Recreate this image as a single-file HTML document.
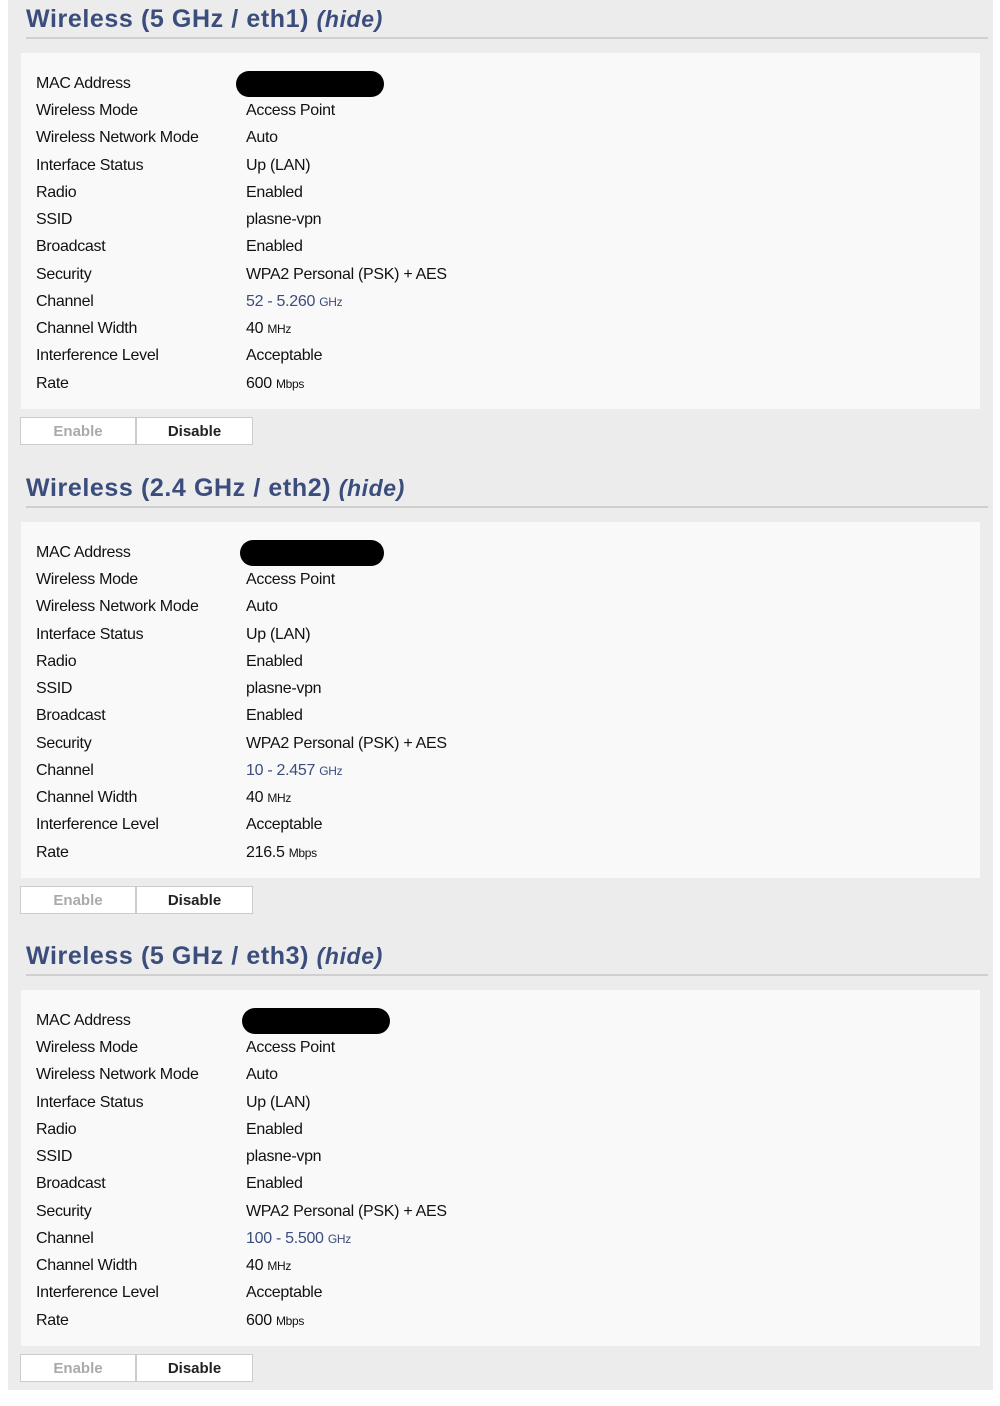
<!DOCTYPE html>
<html><head><style>
body{margin:0;background:#fff;font-family:"Liberation Sans",Arial,sans-serif;}
.wrap{position:absolute;left:8px;top:0;width:985px;height:1390px;background:#ececec;}
.sec{position:absolute;left:0;width:985px;height:469px;}
h2{position:absolute;left:18px;top:5px;margin:0;font-size:25px;font-weight:bold;color:#3b4d7c;letter-spacing:0.6px;white-space:nowrap;}
h2 i{font-size:23px;}
.line{position:absolute;left:18px;top:37px;width:962px;height:2px;background:#cfcfcf;}
.panel{position:absolute;left:13px;top:53px;width:959px;height:356px;background:#f9f9f9;}
.row{position:absolute;left:15px;font-size:16px;color:#111;height:20px;line-height:20px;letter-spacing:-0.3px;margin-top:2px;}
.row .v{position:absolute;left:210px;white-space:nowrap;}
.row .l{white-space:nowrap;}
.sm{font-size:12px;}
.ch{color:#3b4d7c;}
.mac{position:absolute;left:215px;top:18px;width:148px;height:26px;background:#000;border-radius:13px;}
.btn{position:absolute;top:417px;height:28px;line-height:28px;background:#fff;border:1px solid #ccc;text-align:center;font-weight:bold;font-size:15px;box-sizing:border-box;}
</style></head><body><div class="wrap">
<div class="sec" style="top:0">
<h2>Wireless (5 GHz / eth1) <i>(hide)</i></h2><div class="line"></div>
<div class="panel"><div class="mac"></div>
<div class="row" style="top:19px"><span class="l">MAC Address</span></div>
<div class="row" style="top:46px"><span class="l">Wireless Mode</span><span class="v">Access Point</span></div>
<div class="row" style="top:73px"><span class="l">Wireless Network Mode</span><span class="v">Auto</span></div>
<div class="row" style="top:101px"><span class="l">Interface Status</span><span class="v">Up (LAN)</span></div>
<div class="row" style="top:128px"><span class="l">Radio</span><span class="v">Enabled</span></div>
<div class="row" style="top:155px"><span class="l">SSID</span><span class="v">plasne-vpn</span></div>
<div class="row" style="top:182px"><span class="l">Broadcast</span><span class="v">Enabled</span></div>
<div class="row" style="top:210px"><span class="l">Security</span><span class="v">WPA2 Personal (PSK) + AES</span></div>
<div class="row" style="top:237px"><span class="l">Channel</span><span class="v ch">52 - 5.260 <span class="sm">GHz</span></span></div>
<div class="row" style="top:264px"><span class="l">Channel Width</span><span class="v">40 <span class="sm">MHz</span></span></div>
<div class="row" style="top:291px"><span class="l">Interference Level</span><span class="v">Acceptable</span></div>
<div class="row" style="top:319px"><span class="l">Rate</span><span class="v">600 <span class="sm">Mbps</span></span></div>
</div>
<div class="btn" style="left:12px;width:116px;color:#aaa">Enable</div>
<div class="btn" style="left:128px;width:117px;color:#222">Disable</div>
</div>
<div class="sec" style="top:469px">
<h2>Wireless (2.4 GHz / eth2) <i>(hide)</i></h2><div class="line"></div>
<div class="panel"><div class="mac" style="left:219px;width:144px"></div>
<div class="row" style="top:19px"><span class="l">MAC Address</span></div>
<div class="row" style="top:46px"><span class="l">Wireless Mode</span><span class="v">Access Point</span></div>
<div class="row" style="top:73px"><span class="l">Wireless Network Mode</span><span class="v">Auto</span></div>
<div class="row" style="top:101px"><span class="l">Interface Status</span><span class="v">Up (LAN)</span></div>
<div class="row" style="top:128px"><span class="l">Radio</span><span class="v">Enabled</span></div>
<div class="row" style="top:155px"><span class="l">SSID</span><span class="v">plasne-vpn</span></div>
<div class="row" style="top:182px"><span class="l">Broadcast</span><span class="v">Enabled</span></div>
<div class="row" style="top:210px"><span class="l">Security</span><span class="v">WPA2 Personal (PSK) + AES</span></div>
<div class="row" style="top:237px"><span class="l">Channel</span><span class="v ch">10 - 2.457 <span class="sm">GHz</span></span></div>
<div class="row" style="top:264px"><span class="l">Channel Width</span><span class="v">40 <span class="sm">MHz</span></span></div>
<div class="row" style="top:291px"><span class="l">Interference Level</span><span class="v">Acceptable</span></div>
<div class="row" style="top:319px"><span class="l">Rate</span><span class="v">216.5 <span class="sm">Mbps</span></span></div>
</div>
<div class="btn" style="left:12px;width:116px;color:#aaa">Enable</div>
<div class="btn" style="left:128px;width:117px;color:#222">Disable</div>
</div>
<div class="sec" style="top:937px">
<h2>Wireless (5 GHz / eth3) <i>(hide)</i></h2><div class="line"></div>
<div class="panel"><div class="mac" style="left:221px"></div>
<div class="row" style="top:19px"><span class="l">MAC Address</span></div>
<div class="row" style="top:46px"><span class="l">Wireless Mode</span><span class="v">Access Point</span></div>
<div class="row" style="top:73px"><span class="l">Wireless Network Mode</span><span class="v">Auto</span></div>
<div class="row" style="top:101px"><span class="l">Interface Status</span><span class="v">Up (LAN)</span></div>
<div class="row" style="top:128px"><span class="l">Radio</span><span class="v">Enabled</span></div>
<div class="row" style="top:155px"><span class="l">SSID</span><span class="v">plasne-vpn</span></div>
<div class="row" style="top:182px"><span class="l">Broadcast</span><span class="v">Enabled</span></div>
<div class="row" style="top:210px"><span class="l">Security</span><span class="v">WPA2 Personal (PSK) + AES</span></div>
<div class="row" style="top:237px"><span class="l">Channel</span><span class="v ch">100 - 5.500 <span class="sm">GHz</span></span></div>
<div class="row" style="top:264px"><span class="l">Channel Width</span><span class="v">40 <span class="sm">MHz</span></span></div>
<div class="row" style="top:291px"><span class="l">Interference Level</span><span class="v">Acceptable</span></div>
<div class="row" style="top:319px"><span class="l">Rate</span><span class="v">600 <span class="sm">Mbps</span></span></div>
</div>
<div class="btn" style="left:12px;width:116px;color:#aaa">Enable</div>
<div class="btn" style="left:128px;width:117px;color:#222">Disable</div>
</div>
</div></body></html>
